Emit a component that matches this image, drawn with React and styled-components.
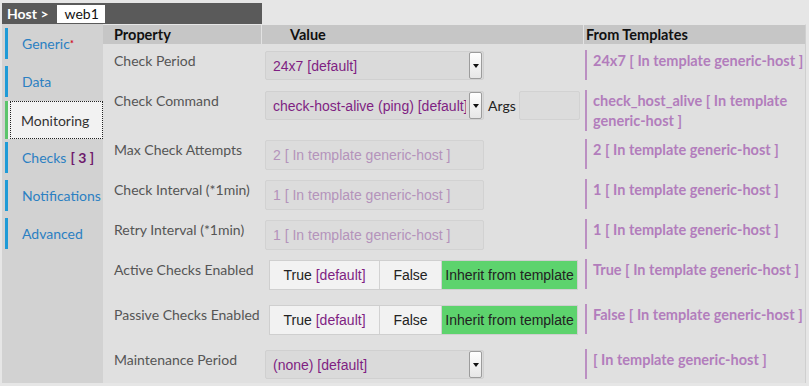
import React from 'react';
import styled, { createGlobalStyle } from 'styled-components';

const Global = createGlobalStyle`
  html, body { margin: 0; padding: 0; background: #e6e6e6; }
  body { font-family: Lato, "Liberation Sans", sans-serif; }
  * { box-sizing: border-box; }
`;

const Page = styled.div`
  width: 809px;
  height: 386px;
  display: flex;
  flex-direction: column;
  background: #e6e6e6;
  overflow: hidden;
`;

const TopBar = styled.div`
  display: flex;
  padding: 3px 0 0 2px;
  height: 24px;
`;

const HostTab = styled.div`
  width: 260px;
  background: #5a5a5a;
  display: flex;
  align-items: center;
  padding-left: 5px;
  gap: 8px;
`;

const HostLabel = styled.span`
  color: #fff;
  font-weight: 700;
  font-size: 14px;
`;

const HostName = styled.span`
  background: #fff;
  color: #111;
  font-size: 14px;
  height: 18px;
  line-height: 18px;
  padding: 0 6px 0 8px;
`;

const Body = styled.div`
  display: flex;
  height: 359px;
  padding: 0 3px 0 2px;
`;

const Sidebar = styled.nav`
  width: 101px;
  background: #d2d2d2;
  display: flex;
  flex-direction: column;
  gap: 7px;
  padding-top: 4px;
`;

const Tab = styled.div`
  display: flex;
  height: ${p => (p.$active ? 38 : 31)}px;
  margin: ${p => (p.$active ? '-3px 0 -4px 3px' : '0 0 0 3px')};
  border-left: 3px solid ${p => (p.$active ? '#5cc46c' : '#1e9bd7')};
  background: ${p => (p.$active ? '#f2f2f2' : 'transparent')};
  padding-left: ${p => (p.$active ? 2 : 0)}px;
`;

const TabLink = styled.span`
  flex: 1;
  display: flex;
  align-items: center;
  padding-left: ${p => (p.$active ? 10 : 13)}px;
  font-size: 14px;
  color: ${p => (p.$active ? '#333' : '#2b80c2')};
  border: 1px dotted ${p => (p.$active ? '#222' : 'transparent')};
  white-space: nowrap;
`;

const Star = styled.sup`
  color: #d0021b;
  font-size: 9px;
  font-weight: 700;
  vertical-align: 5px;
`;

const Count = styled.b`
  color: #6e1a6c;
  margin-left: 4px;
  white-space: pre;
`;

const Main = styled.section`
  flex: 1;
  background: #e0e0e0;
  border-top: 1px solid #e6e6e6;
  border-right: 1px solid #cfcfcf;
  display: flex;
  flex-direction: column;
`;

const cols = '158px 322px 1fr';

const HeaderRow = styled.div`
  display: grid;
  grid-template-columns: ${cols};
  height: 19px;
  background: #c6c6c6;
`;

const HeadCell = styled.div`
  font-weight: 700;
  font-size: 14.5px;
  line-height: 19px;
  color: #111;
  padding-left: ${p => p.$pl}px;
  border-left: ${p => (p.$divider ? '1px solid #e2e2e2' : 'none')};
  white-space: nowrap;
`;

const Row = styled.div`
  display: grid;
  grid-template-columns: ${cols};
  align-items: start;
  height: ${p => p.$h}px;
  padding-top: 6px;
`;

const Label = styled.div`
  padding: 3px 0 0 11px;
  font-size: 14px;
  line-height: 16px;
  color: #555;
  white-space: nowrap;
`;

const ValueCell = styled.div`
  padding: 1px 0 0 ${p => p.$pl ?? 4}px;
  display: flex;
  align-items: center;
`;

const Template = styled.div`
  margin-left: 2px;
  border-left: 2px solid #bb8fc2;
  min-height: 30px;
  padding: 1px 0 0 6px;
  font-weight: 700;
  font-size: 14.5px;
  line-height: 20px;
  color: #b27dbc;
  white-space: nowrap;
`;

const Select = styled.div`
  width: 219px;
  height: 29px;
  display: flex;
  align-items: center;
  background: #dadada;
  border: 1px solid #d0d0d0;
  border-radius: 2px;
  padding: 0 1px 0 0;
`;

const SelectText = styled.span`
  flex: 1;
  overflow: hidden;
  white-space: nowrap;
  padding-left: 7px;
  margin-right: 3px;
  font-family: "Liberation Sans", Arial, sans-serif;
  font-size: 14px;
  color: #7f1f82;
`;

const SelectArrow = styled.span`
  flex: none;
  width: 13px;
  height: 27px;
  border: 1px solid #9c9c9c;
  border-radius: 2px;
  background: linear-gradient(#ffffff, #e6e6e6);
  display: flex;
  align-items: center;
  justify-content: center;
  &::after {
    content: '';
    border-left: 3px solid transparent;
    border-right: 3px solid transparent;
    border-top: 4px solid #111;
  }
`;

const Input = styled.input`
  width: ${p => p.$w ?? 219}px;
  height: ${p => p.$hgt ?? 30}px;
  background: #dcdcdc;
  border: 1px solid #d2d2d2;
  border-radius: 2px;
  padding: 0 0 0 7px;
  font-family: "Liberation Sans", Arial, sans-serif;
  font-size: 14px;
  outline: none;
  &::placeholder { color: #b493bb; }
`;

const ArgsLabel = styled.span`
  font-size: 14px;
  color: #222;
  margin: 0 3px 0 4px;
`;

const Toggle = styled.div`
  display: flex;
  margin-left: 4px;
  height: 30px;
  border: 1px solid #cfcfcf;
`;

const ToggleBtn = styled.span`
  width: ${p => p.$w}px;
  display: flex;
  align-items: center;
  justify-content: center;
  font-family: "Liberation Sans", Arial, sans-serif;
  font-size: 14px;
  color: #222;
  white-space: nowrap;
  background: ${p => (p.$on ? '#5dd36d' : '#f2f2f2')};
  border-left: ${p => (p.$first ? 'none' : '1px solid #d2d2d2')};
`;

const Def = styled.span`
  color: #7f1f82;
  margin-left: 4px;
`;

const TabItem = ({ active, children }) => (
  <Tab $active={active}>
    <TabLink $active={active}>{children}</TabLink>
  </Tab>
);

const TplSelect = ({ text }) => (
  <Select>
    <SelectText>{text}</SelectText>
    <SelectArrow />
  </Select>
);

const ToggleGroup = () => (
  <Toggle>
    <ToggleBtn $w={109} $first>True<Def>[default]</Def></ToggleBtn>
    <ToggleBtn $w={62}>False</ToggleBtn>
    <ToggleBtn $w={136} $on>Inherit from template</ToggleBtn>
  </Toggle>
);

export default function App() {
  return (
    <Page>
      <Global />
      <TopBar>
        <HostTab>
          <HostLabel>Host &gt;</HostLabel>
          <HostName>web1</HostName>
        </HostTab>
      </TopBar>
      <Body>
        <Sidebar>
          <TabItem>Generic<Star>*</Star></TabItem>
          <TabItem>Data</TabItem>
          <TabItem active>Monitoring</TabItem>
          <TabItem>Checks<Count>[ 3 ]</Count></TabItem>
          <TabItem>Notifications</TabItem>
          <TabItem>Advanced</TabItem>
        </Sidebar>
        <Main>
          <HeaderRow>
            <HeadCell $pl={11}>Property</HeadCell>
            <HeadCell $pl={28} $divider>Value</HeadCell>
            <HeadCell $pl={2} $divider>From Templates</HeadCell>
          </HeaderRow>

          <Row $h={40}>
            <Label>Check Period</Label>
            <ValueCell><TplSelect text="24x7 [default]" /></ValueCell>
            <Template>24x7 [ In template generic-host ]</Template>
          </Row>

          <Row $h={49}>
            <Label>Check Command</Label>
            <ValueCell>
              <TplSelect text="check-host-alive (ping) [default]" />
              <ArgsLabel>Args</ArgsLabel>
              <Input $w={61} $hgt={29} />
            </ValueCell>
            <Template>check_host_alive [ In template<br />generic-host ]</Template>
          </Row>

          <Row $h={40}>
            <Label>Max Check Attempts</Label>
            <ValueCell><Input placeholder="2 [ In template generic-host ]" /></ValueCell>
            <Template>2 [ In template generic-host ]</Template>
          </Row>

          <Row $h={40}>
            <Label>Check Interval (*1min)</Label>
            <ValueCell><Input placeholder="1 [ In template generic-host ]" /></ValueCell>
            <Template>1 [ In template generic-host ]</Template>
          </Row>

          <Row $h={40}>
            <Label>Retry Interval (*1min)</Label>
            <ValueCell><Input placeholder="1 [ In template generic-host ]" /></ValueCell>
            <Template>1 [ In template generic-host ]</Template>
          </Row>

          <Row $h={45}>
            <Label>Active Checks Enabled</Label>
            <ValueCell><ToggleGroup /></ValueCell>
            <Template>True [ In template generic-host ]</Template>
          </Row>

          <Row $h={45}>
            <Label>Passive Checks Enabled</Label>
            <ValueCell><ToggleGroup /></ValueCell>
            <Template>False [ In template generic-host ]</Template>
          </Row>

          <Row $h={40}>
            <Label>Maintenance Period</Label>
            <ValueCell><TplSelect text="(none) [default]" /></ValueCell>
            <Template>[ In template generic-host ]</Template>
          </Row>
        </Main>
      </Body>
    </Page>
  );
}
